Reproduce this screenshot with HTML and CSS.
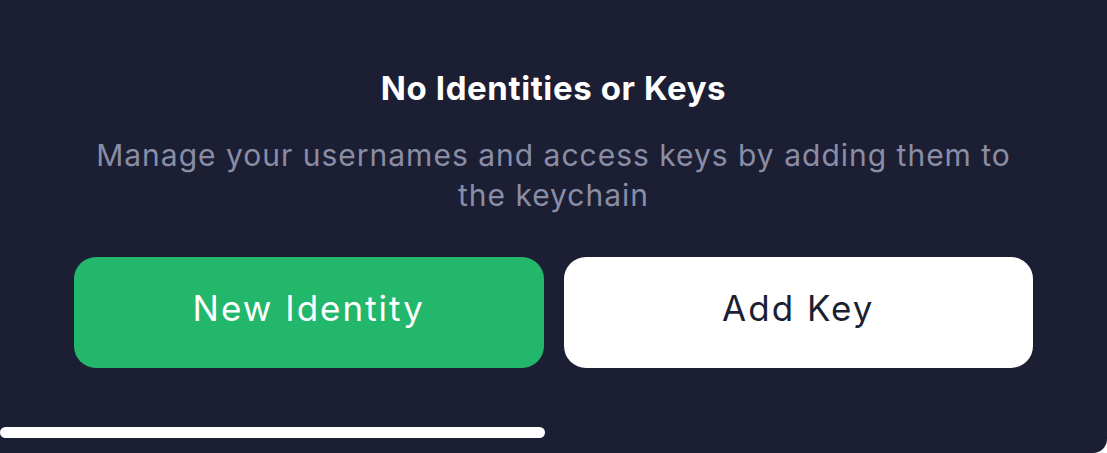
FILE: index.html
```html
<!DOCTYPE html>
<html lang="en">
<head>
    <meta charset="UTF-8">
    <meta name="viewport" content="width=device-width, initial-scale=1.0">
    <title>Keychain</title>
    <link rel="stylesheet" href="styles.css">
</head>
<body>
    <div class="panel">
        <div class="empty-state">
            <h1>No Identities or Keys</h1>
            <p>Manage your usernames and access keys by adding them to the keychain</p>
        </div>
        <div class="actions">
            <button class="btn btn-green">New Identity</button>
            <button class="btn btn-white">Add Key</button>
        </div>
        <div class="home-bar"></div>
    </div>
</body>
</html>
```

FILE: styles.css
```css
* {
    margin: 0;
    padding: 0;
    box-sizing: border-box;
}
body {
    font-family: Inter, 'Noto Sans', sans-serif;
    background-color: #fff;
    width: 1107px;
    height: 453px;
    overflow: hidden;
}
.panel {
    height: 453px;
    background-color: #1c1f33;
    border-bottom-right-radius: 14px;
    padding-top: 68px;
    display: flex;
    flex-direction: column;
}
.empty-state {
    text-align: center;
    padding: 0 80px;
}
h1 {
    color: #fff;
    font-size: 33px;
    line-height: 40px;
    font-weight: 700;
    letter-spacing: 0.6px;
}
.empty-state p {
    margin-top: 27px;
    color: #8a8da6;
    font-size: 30px;
    line-height: 40px;
    letter-spacing: 1px;
}
.actions {
    display: flex;
    gap: 20px;
    padding: 0 74px;
    margin-top: 42px;
}
.btn {
    flex: 1;
    height: 111px;
    padding-bottom: 9px;
    border: none;
    border-radius: 22px;
    font-family: inherit;
    font-size: 35px;
    letter-spacing: 2px;
    cursor: pointer;
}
.btn-green {
    background-color: #22b76a;
    color: #fff;
}
.btn-white {
    background-color: #fff;
    color: #1c1f33;
}
.home-bar {
    width: 545px;
    height: 11px;
    margin-top: 59px;
    background-color: #fff;
    border-radius: 6px;
}
```
